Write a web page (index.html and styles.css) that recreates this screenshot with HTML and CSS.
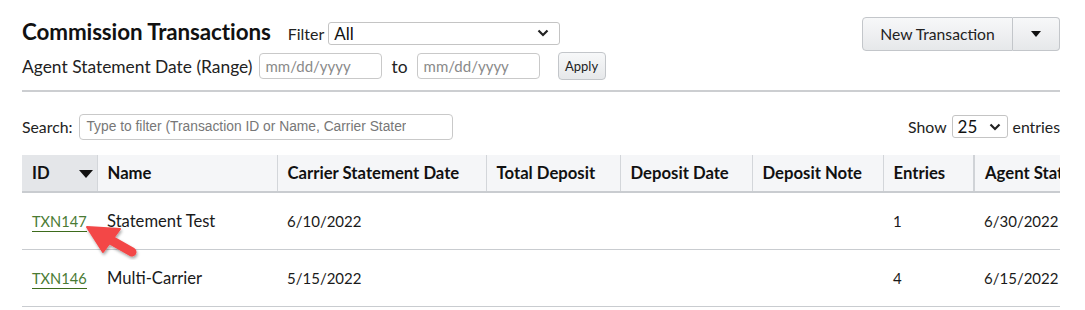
FILE: index.html
```html
<!DOCTYPE html>
<html>
<head>
<meta charset="utf-8">
<link rel="stylesheet" href="styles.css">
</head>
<body>
<div class="page">
  <div class="top">
    <div class="top-left">
      <div class="row1">
        <h1 class="title">Commission Transactions</h1>
        <label class="lbl">Filter</label>
        <div class="select filter-select"><span>All</span><svg class="chev" viewBox="0 0 12 8" width="12" height="8"><path d="M1.5 1.5 L6 6 L10.5 1.5" fill="none" stroke="#222" stroke-width="2.2"/></svg></div>
      </div>
      <div class="row2">
        <span class="lbl">Agent Statement Date (Range)</span>
        <div class="input date"><span class="ph">mm/dd/yyyy</span></div>
        <span class="lbl to">to</span>
        <div class="input date"><span class="ph">mm/dd/yyyy</span></div>
        <button class="btn apply">Apply</button>
      </div>
    </div>
    <div class="split">
      <button class="btn big">New Transaction</button>
      <button class="btn caret"><svg viewBox="0 0 10 6" width="10" height="6"><path d="M0 0 L10 0 L5 6 Z" fill="#111"/></svg></button>
    </div>
  </div>
  <div class="rule"></div>
  <div class="controls">
    <div class="search">
      <span class="lbl sm">Search:</span>
      <div class="input search-input"><span class="ph2">Type to filter (Transaction ID or Name, Carrier Stater</span></div>
    </div>
    <div class="show">
      <span class="lbl sm">Show</span>
      <div class="select len-select"><span>25</span><svg class="chev" viewBox="0 0 12 8" width="12" height="8"><path d="M1.5 1.5 L6 6 L10.5 1.5" fill="none" stroke="#222" stroke-width="2.2"/></svg></div>
      <span class="lbl sm">entries</span>
    </div>
  </div>
  <div class="table-wrap">
    <table class="grid">
      <colgroup>
        <col class="c-id"><col class="c-name"><col class="c-csd"><col class="c-td"><col class="c-dd"><col class="c-dn"><col class="c-en"><col class="c-as">
      </colgroup>
      <thead>
        <tr>
          <th class="sorted"><span>ID</span><svg class="sort" viewBox="0 0 14 8" width="14" height="8"><path d="M0 0 L14 0 L7 8 Z" fill="#111"/></svg></th>
          <th>Name</th>
          <th>Carrier Statement Date</th>
          <th>Total Deposit</th>
          <th>Deposit Date</th>
          <th>Deposit Note</th>
          <th>Entries</th>
          <th class="thick">Agent Stat</th>
        </tr>
      </thead>
      <tbody>
        <tr>
          <td><a class="link" href="#">TXN147</a></td>
          <td>Statement Test</td>
          <td class="num">6/10/2022</td>
          <td></td><td></td><td></td>
          <td class="num">1</td>
          <td class="num">6/30/2022</td>
        </tr>
        <tr>
          <td><a class="link" href="#">TXN146</a></td>
          <td>Multi-Carrier</td>
          <td class="num">5/15/2022</td>
          <td></td><td></td><td></td>
          <td class="num">4</td>
          <td class="num">6/15/2022</td>
        </tr>
      </tbody>
    </table>
    <svg class="pointer" viewBox="0 0 66 48" width="66" height="48">
      <defs>
        <filter id="sh" x="-30%" y="-30%" width="160%" height="160%">
          <feDropShadow dx="1" dy="2" stdDeviation="1.6" flood-color="#000" flood-opacity="0.35"/>
        </filter>
      </defs>
      <g filter="url(#sh)" fill="#f34747" stroke="#f34747" stroke-linejoin="round">
        <path d="M7 6 L40 8 L23 31 Z" stroke-width="2"/>
        <path d="M29 18 L52 31" stroke-width="9" stroke-linecap="round" fill="none"/>
      </g>
    </svg>
  </div>
</div>
</body>
</html>
```
FILE: styles.css
```css
* { box-sizing: border-box; }
html, body { margin: 0; padding: 0; background: #fff; }
body {
  font-family: Lato, "Noto Sans", sans-serif;
  color: #1a1a1a;
  font-size: 16px;
}
.page {
  padding: 17px 25px 0 22px;
  position: relative;
}
.top {
  display: flex;
  justify-content: space-between;
  align-items: flex-start;
}
.row1 {
  display: flex;
  align-items: center;
  height: 28px;
  margin-top: 2px;
}
.title {
  font-size: 22.4px;
  font-weight: 700;
  margin: 0 17px 4px 0;
  color: #111;
  letter-spacing: -0.1px;
}
.lbl { font-size: 17.4px; color: #222; }
.lbl.sm { font-size: 15.8px; }
.row1 .lbl { margin-right: 4px; font-size: 16px; }
.select {
  display: flex;
  align-items: center;
  justify-content: space-between;
  border: 1px solid #c4c4c4;
  border-radius: 3px;
  background: #fff;
  padding: 0 10px 0 5px;
  font-size: 17px;
  color: #111;
}
.filter-select { width: 232px; height: 23px; }
.row2 {
  display: flex;
  align-items: center;
  margin-top: 5px;
  height: 28px;
}
.input {
  border: 1px solid #c9c9c9;
  border-radius: 4px;
  background: #fff;
  display: flex;
  align-items: center;
}
.date { width: 123px; height: 26px; padding-left: 6px; margin-left: 6px; }
.to { margin: 0 3px 0 10px; }
.ph { color: #8a8a8a; font-size: 15px; }
.btn {
  font-family: inherit;
  border: 1px solid #c3c6ca;
  border-radius: 4px;
  background: linear-gradient(#f7f8f9, #e6e8ea);
  color: #222;
  cursor: pointer;
}
.apply {
  margin-left: 18px;
  height: 28px;
  width: 48px;
  font-size: 13px;
  padding: 0;
}
.split { display: flex; margin-top: 0; }
.big {
  height: 34px;
  width: 151px;
  font-size: 15.7px;
  border-radius: 4px 0 0 4px;
  padding: 0;
}
.caret {
  height: 34px;
  width: 47px;
  border-left: none;
  border-radius: 0 4px 4px 0;
  display: flex;
  align-items: center;
  justify-content: center;
  padding: 0;
}
.rule {
  height: 2px;
  background: #ccced1;
  margin-top: 10px;
}
.controls {
  display: flex;
  justify-content: space-between;
  align-items: center;
  margin-top: 21px;
  height: 27px;
}
.search, .show { display: flex; align-items: center; }
.search-input {
  width: 374px;
  height: 26px;
  margin-left: 7px;
  padding-left: 6px;
}
.ph2 {
  font-family: "Liberation Sans", Arial, sans-serif;
  color: #777;
  font-size: 13.8px;
  white-space: nowrap;
  overflow: hidden;
}
.len-select {
  width: 56px;
  height: 23px;
  margin: 0 5px;
  padding: 0 6px 0 5px;
  font-size: 17px;
}
.table-wrap {
  margin-top: 15px;
  overflow: hidden;
  position: relative;
}
.grid {
  border-collapse: collapse;
  table-layout: fixed;
  width: 1090px;
}
.c-id { width: 75px; }
.c-name { width: 180px; }
.c-csd { width: 209px; }
.c-td { width: 134px; }
.c-dd { width: 132px; }
.c-dn { width: 131px; }
.c-en { width: 91px; }
.c-as { width: 138px; }
th {
  background: #f5f6f8;
  height: 37px;
  text-align: left;
  font-weight: 700;
  font-size: 16.7px;
  padding: 0 10px;
  border-left: 1px solid #d3d6da;
  border-bottom: 2px solid #c9ccd0;
  color: #111;
  white-space: nowrap;
  overflow: hidden;
}
th:first-child { border-left: none; }
th.thick { border-left: 2px solid #d0d3d7; }
th.sorted {
  background: #e4e6e9;
  position: relative;
}
.sort { position: absolute; right: 4px; top: 15px; }
td {
  height: 57px;
  padding: 0 10px;
  border-bottom: 1px solid #c9ccd0;
  font-size: 16.6px;
  color: #1a1a1a;
  white-space: nowrap;
}
td.num { font-size: 15px; }
.link {
  color: #4a7b34;
  font-size: 14.6px;
  text-decoration: none;
  border-bottom: 1px solid #3d6b1c;
  padding-bottom: 1px;
}
.pointer {
  position: absolute;
  left: 58px;
  top: 66px;
  overflow: visible;
}
```
